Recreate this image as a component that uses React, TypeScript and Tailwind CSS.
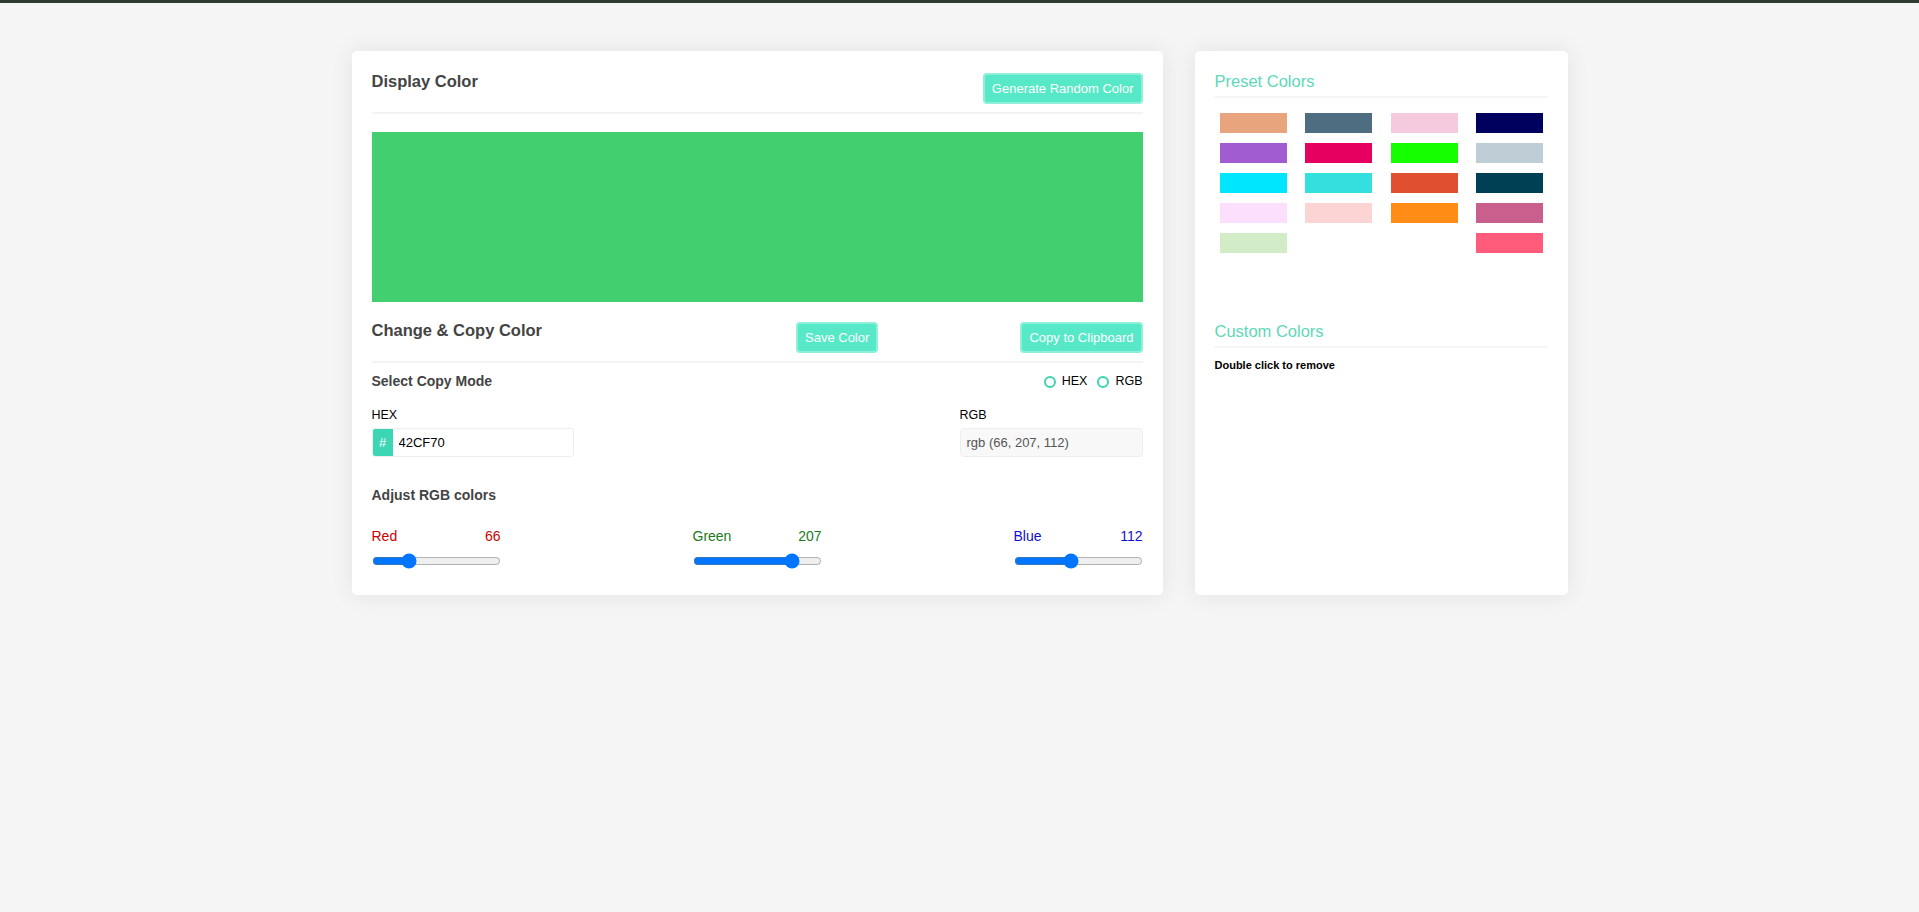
import React from 'react'

const presets: (string | null)[] = [
  '#e8a47c', '#4f6d80', '#f5c9de', '#00005e',
  '#a05cd0', '#e60060', '#16ff00', '#bfcdd6',
  '#00e6ff', '#33e0de', '#e05030', '#004055',
  '#fcdffc', '#fcd4d4', '#ff8c14', '#c85f8c',
  '#d2ecc8', null, null, '#ff5c7c',
]

const Btn = ({ children }: { children: React.ReactNode }) => (
  <button className="h-[31px] px-[7px] rounded-[4px] border-2 border-[#8ef0d9] bg-[#57e9c7] text-white text-[13px] leading-none whitespace-nowrap">
    {children}
  </button>
)

const Radio = ({ label }: { label: string }) => (
  <label className="flex items-center gap-[6px] text-[12.5px] text-black">
    <span className="w-[12px] h-[12px] rounded-full border-2 border-[#3fd2b3] bg-white" />
    {label}
  </label>
)

const Channel = ({ name, value, color }: { name: string; value: number; color: string }) => (
  <div className="w-[129px]">
    <div className="flex justify-between text-[14px]" style={{ color }}>
      <span>{name}</span>
      <span>{value}</span>
    </div>
    <input
      type="range"
      min={0}
      max={255}
      defaultValue={value}
      className="w-[129px] block m-0 mt-[6px] accent-[#0075ff]"
    />
  </div>
)

export default function App() {
  return (
    <div className="min-h-[912px] bg-[#f5f5f5] border-t-[3px] border-[#2f3a33] font-['Liberation_Sans',Arial,sans-serif]">
      <div className="flex justify-center gap-[32px] pt-[48px]">
        {/* main card */}
        <div className="w-[811px] bg-white rounded-[5px] shadow-[0_0_24px_rgba(0,0,0,0.08)] px-[20px] pt-[20px] pb-[26px]">
          <div className="flex justify-between items-start pb-[8px] border-b-2 border-[#f3f3f3]">
            <h2 className="text-[16.5px] font-bold text-[#444] leading-[20px]">Display Color</h2>
            <div className="mt-[2px]">
              <Btn>Generate Random Color</Btn>
            </div>
          </div>
          <div className="mt-[18px] h-[170px] bg-[#42cf70]" />

          <div className="mt-[18px] flex items-start pb-[8px] border-b-2 border-[#f3f3f3]">
            <h2 className="text-[16.5px] font-bold text-[#444] leading-[20px] flex-1">Change &amp; Copy Color</h2>
            <div className="mt-[2px] flex-1 flex justify-between">
              <div className="ml-[39px]">
                <Btn>Save Color</Btn>
              </div>
              <Btn>Copy to Clipboard</Btn>
            </div>
          </div>

          <div className="mt-[8px] flex justify-between items-center">
            <span className="text-[14px] font-bold text-[#444]">Select Copy Mode</span>
            <div className="flex items-center gap-[10px]">
              <Radio label="HEX" />
              <Radio label="RGB" />
            </div>
          </div>

          <div className="mt-[16px] flex justify-between">
            <div>
              <div className="text-[12.5px] text-black leading-[15px]">HEX</div>
              <div className="mt-[5px] flex w-[202px] h-[29px] rounded-[3px] border border-[#eeeeee] overflow-hidden">
                <span className="w-[20px] shrink-0 bg-[#3dd6b5] text-white text-[13px] flex items-center justify-center">#</span>
                <input
                  defaultValue="42CF70"
                  className="min-w-0 flex-1 px-[6px] text-[13px] font-normal text-black outline-none"
                />
              </div>
            </div>
            <div>
              <div className="text-[12.5px] text-black leading-[15px]">RGB</div>
              <div className="mt-[5px] w-[183px] h-[29px] rounded-[4px] border border-[#eeeeee] bg-[#f8f8f8] px-[6px] flex items-center text-[13px] text-[#555]">
                rgb (66, 207, 112)
              </div>
            </div>
          </div>

          <div className="mt-[28px] text-[14px] font-bold text-[#444]">Adjust RGB colors</div>

          <div className="mt-[20px] flex justify-between">
            <Channel name="Red" value={66} color="#cc0000" />
            <Channel name="Green" value={207} color="#1c7a1c" />
            <Channel name="Blue" value={112} color="#1010cc" />
          </div>
        </div>

        {/* side card */}
        <div className="w-[373px] bg-white rounded-[5px] shadow-[0_0_24px_rgba(0,0,0,0.08)] px-[20px] pt-[20px]">
          <h3 className="text-[16.5px] text-[#5dd8b8] leading-[20px] pb-[5px] border-b-2 border-[#f5f5f5]">Preset Colors</h3>
          <div className="mt-[15px] pl-[5px] pr-[4px] grid grid-cols-[repeat(4,67px)] justify-between gap-y-[10px]">
            {presets.map((c, i) => (
              <div key={i} className="h-[20px]" style={{ backgroundColor: c ?? 'transparent' }} />
            ))}
          </div>
          <h3 className="mt-[68px] text-[16.5px] text-[#5dd8b8] leading-[20px] pb-[5px] border-b-2 border-[#f5f5f5]">Custom Colors</h3>
          <p className="mt-[9px] text-[11px] font-bold text-black">Double click to remove</p>
        </div>
      </div>
    </div>
  )
}
